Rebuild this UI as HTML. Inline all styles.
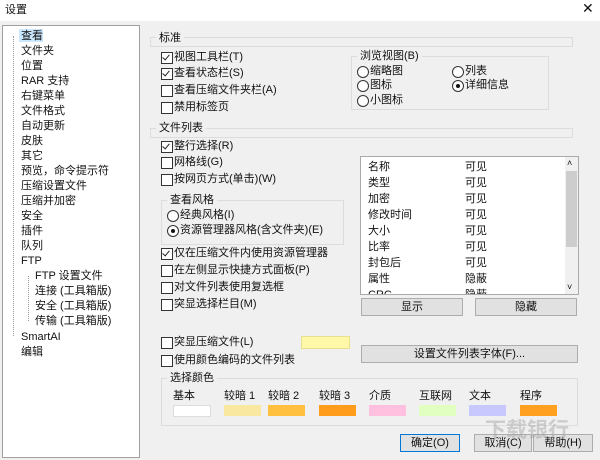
<!DOCTYPE html><html><head><meta charset="utf-8"><style>
body{margin:0;width:600px;height:460px;background:#f0f0f0;font-family:"Liberation Sans","Noto Sans CJK SC",sans-serif;font-size:11px;color:#111;position:relative;overflow:hidden}
.a{position:absolute;white-space:nowrap;line-height:13px}
.cb{position:absolute;width:10px;height:10px;border:1px solid #333;background:#fff}
.cb.on::after{content:"";position:absolute;left:2px;top:0px;width:3px;height:6px;border:solid #222;border-width:0 1.5px 1.5px 0;transform:rotate(40deg)}
.rb{position:absolute;width:10px;height:10px;border:1px solid #333;border-radius:50%;background:#fff}
.rb.on::after{content:"";position:absolute;left:3px;top:3px;width:4px;height:4px;border-radius:50%;background:#111}
.gb{position:absolute;border:1px solid #dcdcdc}
.btn{position:absolute;background:#e1e1e1;border:1px solid #adadad;text-align:center;line-height:16px}
.sw{position:absolute;width:37px;height:11px;top:405px}
</style></head><body>
<div class="a" style="left:0;top:0;width:600px;height:21px;background:#fff"></div>
<div class="a" style="left:5px;top:4px">设置</div>
<div class="a" style="left:582px;top:2px;font-size:14px">✕</div>
<div class="a" style="left:2px;top:25px;width:136px;height:431px;background:#fff;border:1px solid #a0a0a0"></div>
<div class="a" style="left:13px;top:36px;width:0;height:300px;border-left:1px dotted #999"></div>
<div class="a" style="left:28px;top:276px;width:0;height:45px;border-left:1px dotted #999"></div>
<div class="a" style="left:19px;top:29px;width:24px;height:13px;background:#cce8ff"></div>
<div class="a" style="left:21px;top:29px;line-height:15px">查看<br>文件夹<br>位置<br>RAR 支持<br>右键菜单<br>文件格式<br>自动更新<br>皮肤<br>其它<br>预览，命令提示符<br>压缩设置文件<br>压缩并加密<br>安全<br>插件<br>队列<br>FTP</div>
<div class="a" style="left:35px;top:269px;line-height:15px">FTP 设置文件<br>连接 (工具箱版)<br>安全 (工具箱版)<br>传输 (工具箱版)</div>
<div class="a" style="left:21px;top:330px;line-height:15px">SmartAI<br>编辑</div>

<div class="gb" style="left:150px;top:37px;width:421px;height:8px"></div>
<div class="a" style="left:156px;top:32px;background:#f0f0f0;padding:0 3px">标准</div>
<div class="cb on" style="left:161px;top:52px"></div><div class="a" style="left:174px;top:51px">视图工具栏(T)</div>
<div class="cb on" style="left:161px;top:68px"></div><div class="a" style="left:174px;top:67px">查看状态栏(S)</div>
<div class="cb" style="left:161px;top:85px"></div><div class="a" style="left:174px;top:84px">查看压缩文件夹栏(A)</div>
<div class="cb" style="left:161px;top:102px"></div><div class="a" style="left:174px;top:101px">禁用标签页</div>

<div class="gb" style="left:351px;top:56px;width:196px;height:52px"></div>
<div class="a" style="left:357px;top:50px;background:#f0f0f0;padding:0 3px">浏览视图(B)</div>
<div class="rb" style="left:357px;top:66px"></div><div class="a" style="left:370px;top:65px">缩略图</div>
<div class="rb" style="left:357px;top:80px"></div><div class="a" style="left:370px;top:79px">图标</div>
<div class="rb" style="left:357px;top:95px"></div><div class="a" style="left:370px;top:94px">小图标</div>
<div class="rb" style="left:452px;top:66px"></div><div class="a" style="left:465px;top:65px">列表</div>
<div class="rb on" style="left:452px;top:80px"></div><div class="a" style="left:465px;top:79px">详细信息</div>

<div class="gb" style="left:150px;top:128px;width:421px;height:8px"></div>
<div class="a" style="left:156px;top:122px;background:#f0f0f0;padding:0 3px">文件列表</div>
<div class="cb on" style="left:161px;top:141px"></div><div class="a" style="left:174px;top:140px">整行选择(R)</div>
<div class="cb" style="left:161px;top:157px"></div><div class="a" style="left:174px;top:156px">网格线(G)</div>
<div class="cb" style="left:161px;top:174px"></div><div class="a" style="left:174px;top:173px">按网页方式(单击)(W)</div>
<div class="gb" style="left:161px;top:200px;width:181px;height:43px"></div>
<div class="a" style="left:167px;top:194px;background:#f0f0f0;padding:0 3px">查看风格</div>
<div class="rb" style="left:167px;top:210px"></div><div class="a" style="left:180px;top:209px">经典风格(I)</div>
<div class="rb on" style="left:167px;top:225px"></div><div class="a" style="left:180px;top:224px">资源管理器风格(含文件夹)(E)</div>
<div class="cb on" style="left:161px;top:248px"></div><div class="a" style="left:174px;top:247px">仅在压缩文件内使用资源管理器</div>
<div class="cb" style="left:161px;top:265px"></div><div class="a" style="left:174px;top:264px">在左侧显示快捷方式面板(P)</div>
<div class="cb" style="left:161px;top:282px"></div><div class="a" style="left:174px;top:281px">对文件列表使用复选框</div>
<div class="cb" style="left:161px;top:299px"></div><div class="a" style="left:174px;top:298px">突显选择栏目(M)</div>

<div class="a" style="left:360px;top:156px;width:217px;height:137px;background:#fff;border:1px solid #aaa;overflow:hidden">
<div class="a" style="left:7px;top:2px;line-height:16px">名称<br>类型<br>加密<br>修改时间<br>大小<br>比率<br>封包后<br>属性<br>CRC</div>
<div class="a" style="left:104px;top:2px;line-height:16px">可见<br>可见<br>可见<br>可见<br>可见<br>可见<br>可见<br>隐蔽<br>隐蔽</div>
<div class="a" style="left:204px;top:0;width:13px;height:137px;background:#f0f0f0"></div>
<div class="a" style="left:205px;top:14px;width:11px;height:76px;background:#cdcdcd"></div>
<div class="a" style="left:206px;top:0;font-size:9px">˄</div>
<div class="a" style="left:206px;top:124px;font-size:9px">˅</div>
</div>
<div class="btn" style="left:361px;top:298px;width:100px;height:16px">显示</div>
<div class="btn" style="left:475px;top:298px;width:100px;height:16px">隐藏</div>

<div class="cb" style="left:161px;top:337px"></div><div class="a" style="left:174px;top:336px">突显压缩文件(L)</div>
<div class="a" style="left:301px;top:336px;width:47px;height:11px;background:#fff8a8;border:1px solid #e8e090"></div>
<div class="btn" style="left:361px;top:345px;width:215px;height:16px">设置文件列表字体(F)...</div>
<div class="cb" style="left:161px;top:355px"></div><div class="a" style="left:174px;top:354px">使用颜色编码的文件列表</div>

<div class="gb" style="left:161px;top:378px;width:415px;height:46px"></div>
<div class="a" style="left:167px;top:372px;background:#f0f0f0;padding:0 3px">选择颜色</div>
<div class="a" style="left:173px;top:390px">基本</div><div class="a" style="left:224px;top:390px">较暗 1</div><div class="a" style="left:268px;top:390px">较暗 2</div><div class="a" style="left:319px;top:390px">较暗 3</div><div class="a" style="left:369px;top:390px">介质</div><div class="a" style="left:419px;top:390px">互联网</div><div class="a" style="left:469px;top:390px">文本</div><div class="a" style="left:520px;top:390px">程序</div>
<div class="sw" style="left:173px;background:#fff;border:1px solid #ddd;height:10px;width:36px"></div>
<div class="sw" style="left:224px;background:#f8e8a0"></div>
<div class="sw" style="left:268px;background:#ffc040"></div>
<div class="sw" style="left:319px;background:#ff9c1c"></div>
<div class="sw" style="left:369px;background:#ffc0e0"></div>
<div class="sw" style="left:419px;background:#e0ffc0"></div>
<div class="sw" style="left:469px;background:#c8c8ff"></div>
<div class="sw" style="left:520px;background:#ffa020"></div>

<div class="btn" style="left:400px;top:434px;width:58px;height:16px;border-color:#0078d7">确定(O)</div>
<div class="btn" style="left:474px;top:434px;width:56px;height:16px">取消(C)</div>
<div class="btn" style="left:533px;top:434px;width:58px;height:16px">帮助(H)</div>
<div class="a" style="left:485px;top:418px;font-size:21px;color:rgba(160,160,160,0.45);font-weight:bold;line-height:26px">下载银行</div>
</body></html>
